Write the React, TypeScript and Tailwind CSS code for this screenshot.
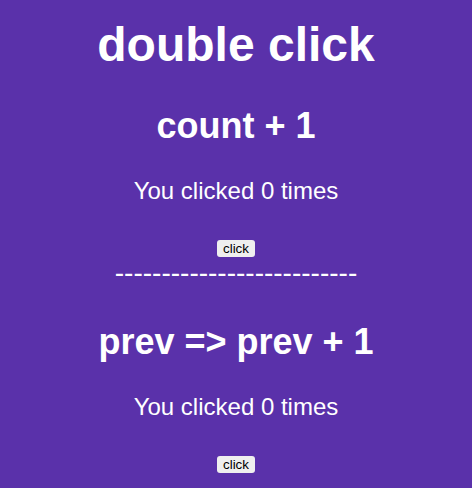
import { useState } from "react";

const Counter = ({ title, mode }: { title: string; mode: "direct" | "updater" }) => {
  const [count, setCount] = useState(0);

  // 두 번 더하기 (direct는 한 번만 반영됨)
  const handleClick = () => {
    if (mode === "direct") {
      setCount(count + 1);
      setCount(count + 1);
    } else {
      setCount((prev) => prev + 1);
      setCount((prev) => prev + 1);
    }
  };

  return (
    <>
      <h2 className="text-[36px] font-bold leading-[41px]">{title}</h2>
      <p className="mt-[31px] text-[24px] leading-[28px]">You clicked {count} times</p>
      <div className="mt-[35px] flex justify-center">
        <button
          onClick={handleClick}
          className="h-[17px] rounded-[3px] bg-[#efefef] px-[6px] text-[13.33px] leading-[17px] text-black"
        >
          click
        </button>
      </div>
    </>
  );
};

const App = () => {
  return (
    <div className="h-[488px] overflow-hidden bg-[#5a31aa] text-center text-white font-['Liberation_Sans',Arial,sans-serif]">
      <h1 className="pt-[17px] text-[48px] font-bold leading-[55px]">double click</h1>
      <div className="mt-[33px]">
        <Counter title="count + 1" mode="direct" />
      </div>
      <div className="text-[28px] leading-[32px]">--------------------------</div>
      <div className="mt-[32px]">
        <Counter title="prev => prev + 1" mode="updater" />
      </div>
    </div>
  );
};

export default App;
